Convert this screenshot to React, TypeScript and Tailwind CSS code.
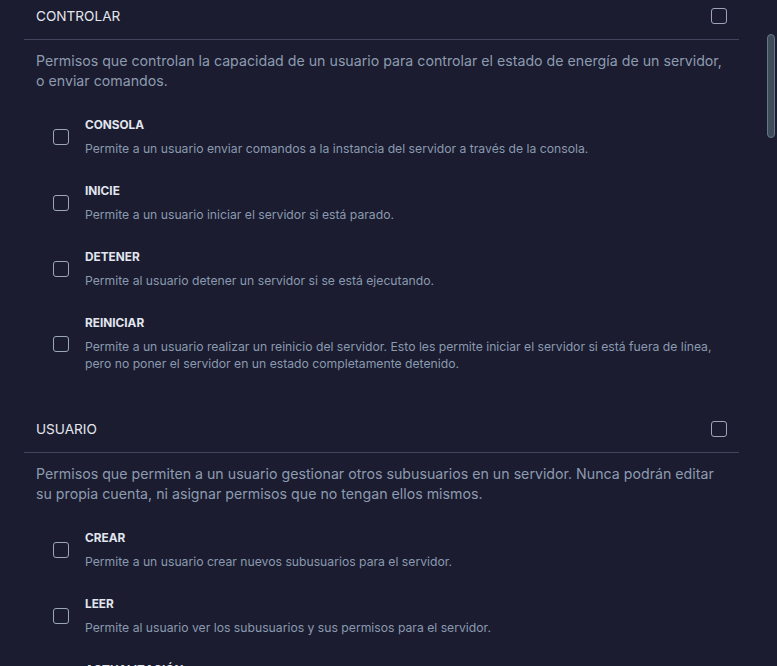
import React from 'react';

type Perm = { title: string; desc: string };

const sections: { name: string; desc: string; perms: Perm[] }[] = [
  {
    name: 'CONTROLAR',
    desc: 'Permisos que controlan la capacidad de un usuario para controlar el estado de energía de un servidor, o enviar comandos.',
    perms: [
      { title: 'CONSOLA', desc: 'Permite a un usuario enviar comandos a la instancia del servidor a través de la consola.' },
      { title: 'INICIE', desc: 'Permite a un usuario iniciar el servidor si está parado.' },
      { title: 'DETENER', desc: 'Permite al usuario detener un servidor si se está ejecutando.' },
      {
        title: 'REINICIAR',
        desc: 'Permite a un usuario realizar un reinicio del servidor. Esto les permite iniciar el servidor si está fuera de línea, pero no poner el servidor en un estado completamente detenido.',
      },
    ],
  },
  {
    name: 'USUARIO',
    desc: 'Permisos que permiten a un usuario gestionar otros subusuarios en un servidor. Nunca podrán editar su propia cuenta, ni asignar permisos que no tengan ellos mismos.',
    perms: [
      { title: 'CREAR', desc: 'Permite a un usuario crear nuevos subusuarios para el servidor.' },
      { title: 'LEER', desc: 'Permite al usuario ver los subusuarios y sus permisos para el servidor.' },
      { title: 'ACTUALIZACIÓN', desc: 'Permite a un usuario modificar otros subusuarios.' },
    ],
  },
];

function Box() {
  return <span className="block w-4 h-4 shrink-0 rounded-[3px] border border-[#9ba6b8] bg-transparent" />;
}

export default function App() {
  return (
    <div
      className="relative h-[666px] overflow-hidden bg-[#1b1c2f]"
      style={{ fontFamily: 'Inter, "Noto Sans", sans-serif' }}
    >
      <div className="w-[715px] ml-6">
        {sections.map((s) => (
          <section key={s.name} className="mb-[28px]">
            <div className="flex items-center justify-between px-3 pt-1.5 pb-[13px] border-b border-[#45445f]">
              <h3 className="text-[13.6px] leading-5 text-[#e4e6ee]">{s.name}</h3>
              <Box />
            </div>
            <p className="px-3 pt-[11px] text-[14.2px] leading-5 text-[#8d9bb0]">{s.desc}</p>
            <div className="mt-[13px]">
              {s.perms.map((p) => (
                <label key={p.title} className="flex items-center gap-4 pl-[29px] pr-3 py-[13px]">
                  <Box />
                  <div>
                    <p className="text-[11.8px] leading-4 font-bold text-[#e2e6ef]">{p.title}</p>
                    <p className="mt-[7px] text-[12.2px] leading-[17px] text-[#8a9ab0]">{p.desc}</p>
                  </div>
                </label>
              ))}
            </div>
          </section>
        ))}
      </div>
      <div className="absolute left-[767px] top-[34px] w-2 h-[104px] rounded-full bg-[#3e4b59] border border-[#66768a]" />
    </div>
  );
}
